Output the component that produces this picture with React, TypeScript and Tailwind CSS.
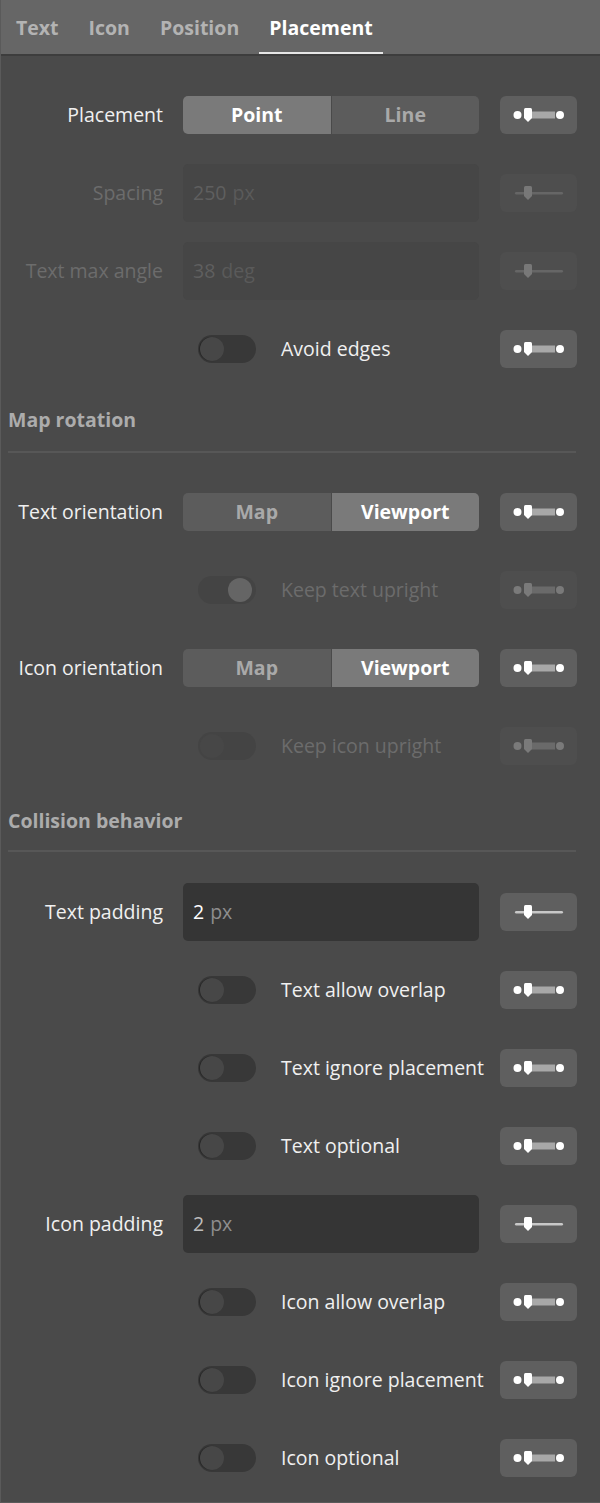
import React from "react";

const FONT = { fontFamily: '"Open Sans", "Noto Sans", sans-serif' };

function RangeIcon({ dim }: { dim?: boolean }) {
  return (
    <svg width="52" height="16" viewBox="0 0 52 16">
      <rect x="14" y="4.5" width="28" height="7" fill={dim ? "#6a6a6a" : "#a8a8a8"} />
      <circle cx="4.5" cy="8" r="4" fill={dim ? "#7a7a7a" : "#ffffff"} />
      <circle cx="47" cy="8" r="4" fill={dim ? "#7a7a7a" : "#ffffff"} />
      <path d="M11 2.5 Q11 1 12.5 1 H17.5 Q19 1 19 2.5 V11 L15 15 L11 11 Z" fill={dim ? "#7a7a7a" : "#ffffff"} />
    </svg>
  );
}

function SliderIcon({ dim }: { dim?: boolean }) {
  return (
    <svg width="52" height="18" viewBox="0 0 52 18">
      <rect x="2" y="8" width="48" height="2.4" rx="1.2" fill={dim ? "#666666" : "#c8c8c8"} />
      <path d="M11 3.5 Q11 2 12.5 2 H17.5 Q19 2 19 3.5 V12 L15 16 L11 12 Z" fill={dim ? "#787878" : "#ffffff"} />
    </svg>
  );
}

function SideButton({ kind, dim }: { kind: "range" | "slider"; dim?: boolean }) {
  return (
    <div
      className={`w-[77px] h-[38px] rounded-[6px] flex items-center justify-center ${
        dim ? "bg-[#4e4e4e]" : "bg-[#5f5f5f]"
      }`}
    >
      {kind === "range" ? <RangeIcon dim={dim} /> : <SliderIcon dim={dim} />}
    </div>
  );
}

function Row({
  label,
  dim,
  children,
  side,
}: {
  label?: string;
  dim?: boolean;
  children: React.ReactNode;
  side: React.ReactNode;
}) {
  return (
    <div className="h-[78px] flex items-center">
      <div
        className={`w-[162px] shrink-0 text-right text-[19.5px] whitespace-nowrap ${dim ? "text-[#6c6c6c]" : "text-[#f0f0f0]"}`}
      >
        {label}
      </div>
      <div className="w-[296px] ml-[20px] flex items-center">{children}</div>
      <div className="ml-[21px]">{side}</div>
    </div>
  );
}

function Segmented({ options, active }: { options: string[]; active: number }) {
  return (
    <div className="w-[296px] h-[38px] flex rounded-[5px] overflow-hidden">
      {options.map((o, i) => (
        <div
          key={o}
          className={`flex-1 flex items-center justify-center font-bold text-[19.5px] ${
            i === active ? "bg-[#7a7a7a] text-white" : "bg-[#5c5c5c] text-[#a9a9a9]"
          } ${i > 0 ? "border-l border-[#4a4a4a]" : ""}`}
        >
          {o}
        </div>
      ))}
    </div>
  );
}

function Input({ value, unit, dim, faint }: { value: string; unit: string; dim?: boolean; faint?: boolean }) {
  return (
    <div
      className={`w-[296px] h-[58px] rounded-[5px] flex items-center pl-[10px] text-[19.5px] ${
        dim ? "bg-[#464646]" : "bg-[#353535]"
      }`}
    >
      <span className={dim ? "text-[#5f5f5f]" : faint ? "text-[#bdbdbd]" : "text-white"}>{value}</span>
      <span className={`ml-[6px] ${dim ? "text-[#5a5a5a]" : "text-[#8e8e8e]"}`}>{unit}</span>
    </div>
  );
}

function Toggle({ label, dim, on }: { label: string; dim?: boolean; on?: boolean }) {
  return (
    <div className="flex items-center">
      <div
        className={`ml-[15px] w-[58px] h-[28px] rounded-full flex items-center px-[2px] ${
          dim ? "bg-[#444444]" : "bg-[#383838]"
        } ${on ? "justify-end" : "justify-start"}`}
      >
        <div
          className={`w-[24px] h-[24px] rounded-full ${
            on ? "bg-[#656565] mr-[2px]" : dim ? "bg-[#474747]" : "bg-[#474747] shadow-[-1px_0_1px_rgba(0,0,0,0.35)]"
          }`}
        />
      </div>
      <div className={`ml-[25px] text-[19.5px] whitespace-nowrap ${dim ? "text-[#6c6c6c]" : "text-[#f0f0f0]"}`}>
        {label}
      </div>
    </div>
  );
}

function Section({ title, top, gap }: { title: string; top: string; gap: string }) {
  return (
    <div className={`${top} pl-[7px] pr-[24px]`}>
      <div className="text-[19.5px] leading-[24px] font-bold text-[#acacac]">{title}</div>
      <div className={`${gap} h-[2px] bg-[#575757]`} />
    </div>
  );
}

export default function App() {
  return (
    <div className="w-[600px] h-[1503px] bg-[#4a4a4a] border-l border-[#5a5a5a] border-b overflow-hidden" style={FONT}>
      <div className="h-[56px] bg-[#666666] border-b-[2px] border-[#3d3d3d] flex items-end">
        {[
          ["Text", "ml-[15px]"],
          ["Icon", "ml-[30px]"],
          ["Position", "ml-[30px]"],
        ].map(([t, m]) => (
          <div key={t} className={`${m} pb-[12px] text-[19.5px] font-bold text-[#b3b3b3]`}>
            {t}
          </div>
        ))}
        <div className="ml-[20px] px-[10px] pb-[10px] border-b-[2px] border-[#e6e6e6] text-[19.5px] font-bold text-white">
          Placement
        </div>
      </div>
      <div className="pt-[20px]">
        <Row label="Placement" side={<SideButton kind="range" />}>
          <Segmented options={["Point", "Line"]} active={0} />
        </Row>
        <Row label="Spacing" dim side={<SideButton kind="slider" dim />}>
          <Input value="250" unit="px" dim />
        </Row>
        <Row label="Text max angle" dim side={<SideButton kind="slider" dim />}>
          <Input value="38" unit="deg" dim />
        </Row>
        <Row side={<SideButton kind="range" />}>
          <Toggle label="Avoid edges" />
        </Row>
      </div>
      <Section title="Map rotation" top="pt-[20px]" gap="mt-[19px]" />
      <div className="pt-[20px]">
        <Row label="Text orientation" side={<SideButton kind="range" />}>
          <Segmented options={["Map", "Viewport"]} active={1} />
        </Row>
        <Row side={<SideButton kind="range" dim />}>
          <Toggle label="Keep text upright" dim on />
        </Row>
        <Row label="Icon orientation" side={<SideButton kind="range" />}>
          <Segmented options={["Map", "Viewport"]} active={1} />
        </Row>
        <Row side={<SideButton kind="range" dim />}>
          <Toggle label="Keep icon upright" dim />
        </Row>
      </div>
      <Section title="Collision behavior" top="pt-[24px]" gap="mt-[17px]" />
      <div className="pt-[21px]">
        <Row label="Text padding" side={<SideButton kind="slider" />}>
          <Input value="2" unit="px" />
        </Row>
        <Row side={<SideButton kind="range" />}>
          <Toggle label="Text allow overlap" />
        </Row>
        <Row side={<SideButton kind="range" />}>
          <Toggle label="Text ignore placement" />
        </Row>
        <Row side={<SideButton kind="range" />}>
          <Toggle label="Text optional" />
        </Row>
        <Row label="Icon padding" side={<SideButton kind="slider" />}>
          <Input value="2" unit="px" faint />
        </Row>
        <Row side={<SideButton kind="range" />}>
          <Toggle label="Icon allow overlap" />
        </Row>
        <Row side={<SideButton kind="range" />}>
          <Toggle label="Icon ignore placement" />
        </Row>
        <Row side={<SideButton kind="range" />}>
          <Toggle label="Icon optional" />
        </Row>
      </div>
    </div>
  );
}
